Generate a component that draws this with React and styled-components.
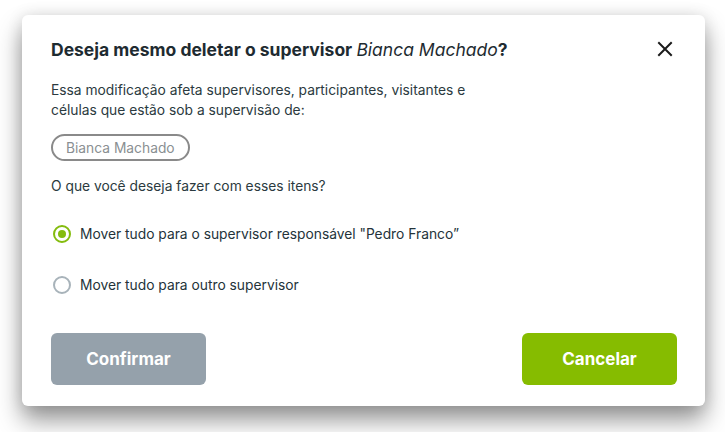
import React, { useState } from 'react';
import styled, { createGlobalStyle } from 'styled-components';

const GlobalStyle = createGlobalStyle`
  html, body {
    margin: 0;
    padding: 0;
    background: #ffffff;
    font-family: Inter, "Open Sans", sans-serif;
  }
  * { box-sizing: border-box; }
`;

const Page = styled.div`
  width: 725px;
  height: 432px;
  padding: 15px 20px 0 22px;
`;

const Modal = styled.div`
  width: 683px;
  height: 391px;
  background: #fff;
  border-radius: 6px;
  box-shadow: 0 14px 24px rgba(0, 0, 0, 0.42), 0 0 16px rgba(0, 0, 0, 0.1);
  padding: 24px 28px 21px 29px;
  display: flex;
  flex-direction: column;
`;

const Header = styled.div`
  display: flex;
  justify-content: space-between;
  align-items: center;
  height: 20px;
`;

const Title = styled.h2`
  margin: 0;
  font-size: 17.5px;
  font-weight: 700;
  color: #1e2b31;

  em {
    font-weight: 400;
    font-style: italic;
  }
`;

const CloseButton = styled.button`
  border: none;
  background: none;
  padding: 0;
  margin-right: 3px;
  width: 18px;
  height: 18px;
  cursor: pointer;
  display: flex;
  align-items: center;
  justify-content: center;
`;

const Text = styled.p`
  margin: ${p => p.$mt || 0}px 0 0;
  font-size: 13.8px;
  line-height: 20px;
  color: #2b3a40;
  max-width: 440px;
`;

const Chip = styled.span`
  align-self: flex-start;
  margin-top: 14px;
  height: 27px;
  padding: 0 13px;
  border: 2px solid #8a8a8a;
  border-radius: 14px;
  display: flex;
  align-items: center;
  font-size: 13.8px;
  color: #8a8f92;
`;

const Options = styled.div`
  display: flex;
  flex-direction: column;
  gap: 31px;
  margin-top: 28px;
`;

const Option = styled.label`
  display: flex;
  align-items: center;
  gap: 9px;
  font-size: 13.8px;
  color: #24333a;
  cursor: pointer;
  height: 20px;
  padding-left: 2px;
`;

const Radio = styled.span`
  width: 18px;
  height: 18px;
  border-radius: 50%;
  border: 2px solid ${p => (p.$checked ? '#84bc0e' : '#a8b3ba')};
  display: flex;
  align-items: center;
  justify-content: center;

  &::after {
    content: '';
    width: 8px;
    height: 8px;
    border-radius: 50%;
    background: #84bc0e;
    display: ${p => (p.$checked ? 'block' : 'none')};
  }
`;

const Footer = styled.div`
  margin-top: auto;
  display: flex;
  justify-content: space-between;
`;

const Button = styled.button`
  width: 155px;
  height: 52px;
  border: none;
  border-radius: 6px;
  background: ${p => (p.$variant === 'primary' ? '#86bc00' : '#95a1ab')};
  color: #fff;
  font-family: Inter, "Open Sans", sans-serif;
  font-size: 17px;
  font-weight: 700;
  cursor: pointer;
`;

const options = [
  'Mover tudo para o supervisor responsável "Pedro Franco”',
  'Mover tudo para outro supervisor',
];

export default function App() {
  const [selected, setSelected] = useState(0);
  return (
    <>
      <GlobalStyle />
      <Page>
        <Modal>
          <Header>
            <Title>
              Deseja mesmo deletar o supervisor <em>Bianca Machado</em>?
            </Title>
            <CloseButton aria-label="Fechar">
              <svg width="16" height="16" viewBox="0 0 16 16">
                <path d="M2 2L14 14M14 2L2 14" stroke="#1b1b1b" strokeWidth="2" strokeLinecap="square" />
              </svg>
            </CloseButton>
          </Header>
          <Text $mt={21}>
            Essa modificação afeta supervisores, participantes, visitantes e<br />
            células que estão sob a supervisão de:
          </Text>
          <Chip>Bianca Machado</Chip>
          <Text $mt={15}>O que você deseja fazer com esses itens?</Text>
          <Options>
            {options.map((o, i) => (
              <Option key={i} onClick={() => setSelected(i)}>
                <Radio $checked={selected === i} />
                {o}
              </Option>
            ))}
          </Options>
          <Footer>
            <Button>Confirmar</Button>
            <Button $variant="primary">Cancelar</Button>
          </Footer>
        </Modal>
      </Page>
    </>
  );
}
